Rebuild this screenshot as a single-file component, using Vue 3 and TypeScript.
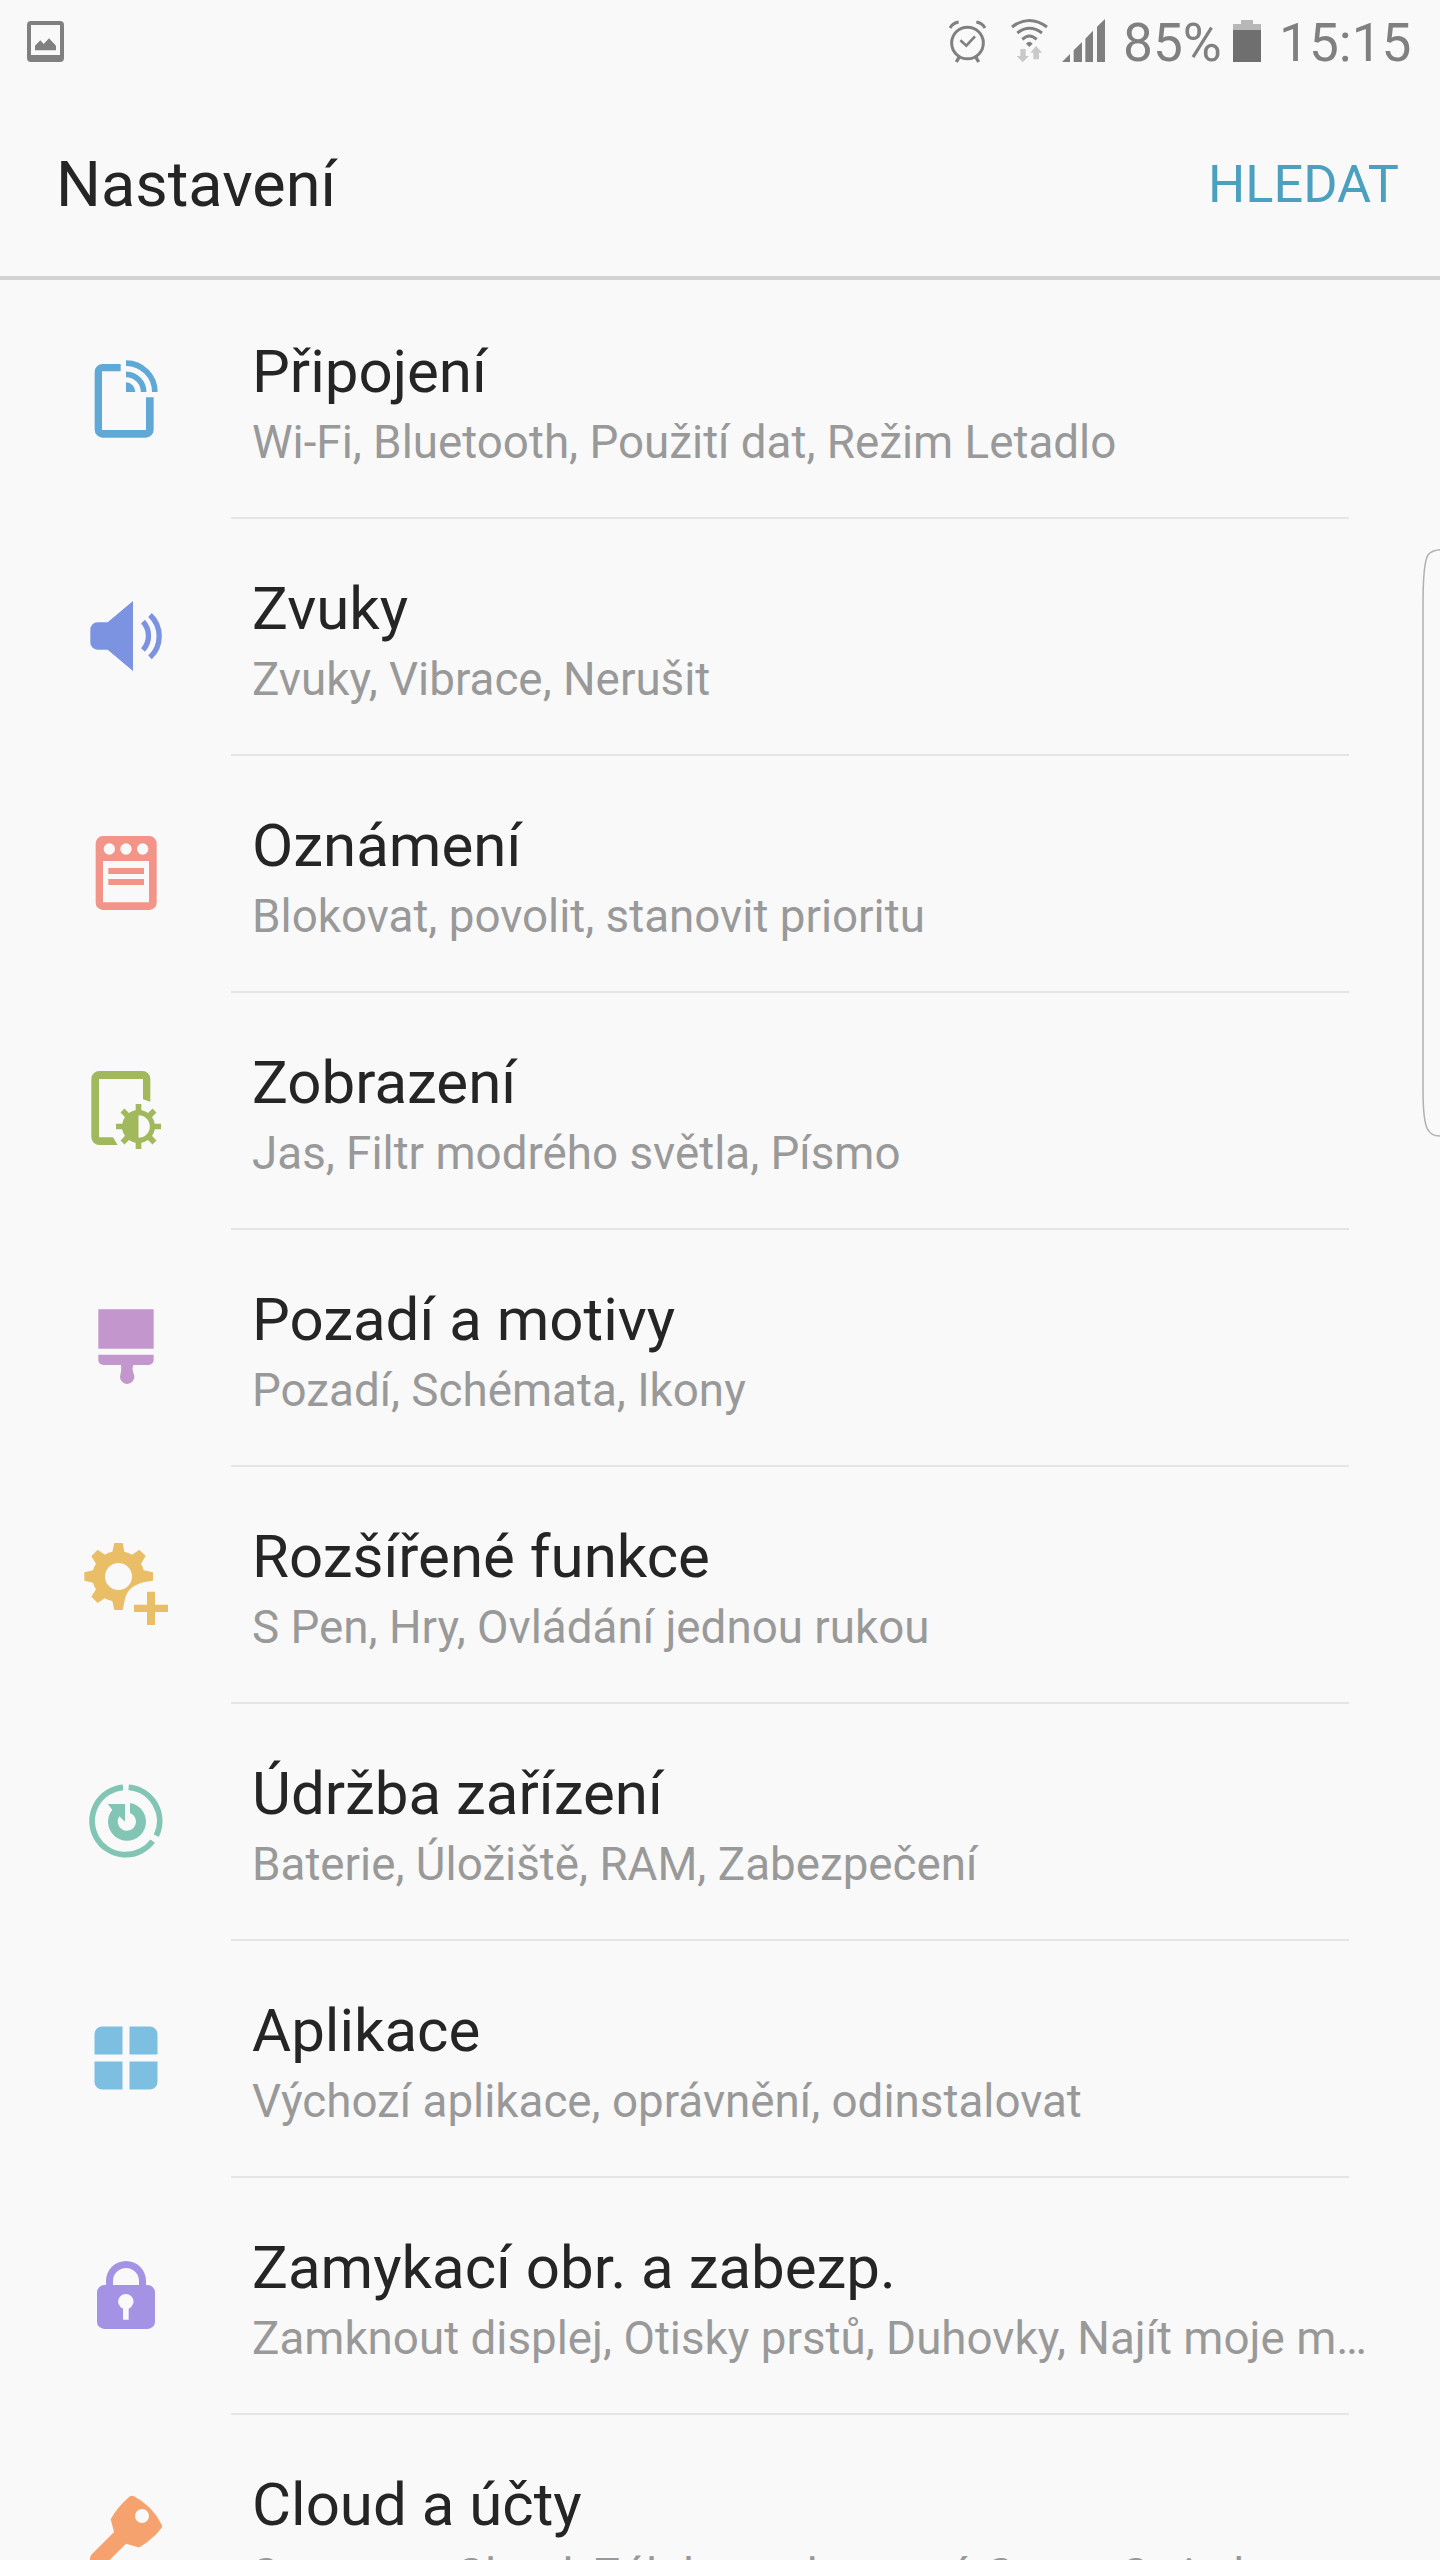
<script setup lang="ts">
interface Shape {
  d: string
  stroke?: number
}

interface SettingItem {
  title: string
  summary: string
  color: string
  viewBox: string
  shapes: Shape[]
}

const circle = (cx: number, cy: number, r: number): string =>
  `M${cx - r} ${cy}a${r} ${r} 0 1 0 ${2 * r} 0a${r} ${r} 0 1 0 ${-2 * r} 0Z`

const items: SettingItem[] = [
  {
    title: 'Připojení',
    summary: 'Wi-Fi, Bluetooth, Použití dat, Režim Letadlo',
    color: '#60a9d7',
    viewBox: '48 57 300 300',
    shapes: [
      { d: 'M182 102H128A24 24 0 0 0 104 126V299A24 24 0 0 0 128 323H257A24 24 0 0 0 281 299V202H258V300H126V124H182Z' },
      { d: 'M198 99.500A86.500 86.500 0 0 1 284.500 186', stroke: 17 },
      { d: 'M198 133A53 53 0 0 1 251 186', stroke: 17 },
      { d: 'M198 157A28 29 0 0 1 226 186H198Z' },
    ],
  },
  {
    title: 'Zvuky',
    summary: 'Zvuky, Vibrace, Nerušit',
    color: '#7b93e0',
    viewBox: '48 768 300 300',
    shapes: [
      { d: 'M143 877L219 813V1023L143 959H112A21 21 0 0 1 91 938V898A21 21 0 0 1 112 877Z' },
      { d: 'M249 875A63 63 0 0 1 249 960', stroke: 16 },
      { d: 'M270 855A87 87 0 0 1 270 982', stroke: 16 },
    ],
  },
  {
    title: 'Oznámení',
    summary: 'Blokovat, povolit, stanovit prioritu',
    color: '#f39488',
    viewBox: '48 39 300 300',
    shapes: [
      {
        d:
          'M130 78H268A22 22 0 0 1 290 100V278A22 22 0 0 1 268 300H129A22 22 0 0 1 107 278V100A22 22 0 0 1 130 78Z' +
          circle(148, 117, 17) + circle(198, 117, 17) + circle(248, 117, 17) +
          'M129 153H267V277H129ZM145 174H252V192H145ZM145 207H252V225H145Z',
      },
    ],
  },
  {
    title: 'Zobrazení',
    summary: 'Jas, Filtr modrého světla, Písmo',
    color: '#a1b95c',
    viewBox: '48 750 300 300',
    shapes: [
      { d: 'M271 875V807A24 24 0 0 0 247 783H118A24 24 0 0 0 94 807V981A24 24 0 0 0 118 1005H173L159 982H117V807H249V868Z' },
      { d: circle(235.5, 949.5, 49.5) + 'M235.500 915.500A34 34 0 0 1 235.500 983.500Z' },
      {
        d: 'M235.500 882V904M235.500 995V1017M168 949.500H190M281 949.500H303M187.500 901.500L203 917M268 982L283.500 997.500M283.500 901.500L268 917M203 982L187.500 997.500',
        stroke: 17,
      },
    ],
  },
  {
    title: 'Pozadí a motivy',
    summary: 'Pozadí, Schémata, Ikony',
    color: '#c396cd',
    viewBox: '48 51 300 300',
    shapes: [
      { d: 'M115 88H281V206H115Z' },
      { d: 'M115 224H281V240A15 15 0 0 1 266 255H220C217 263 217 270 220 279A21.500 21.500 0 1 1 181 284C184 274 184 264 183 255H130A15 15 0 0 1 115 240Z' },
    ],
  },
  {
    title: 'Rozšířené funkce',
    summary: 'S Pen, Hry, Ovládání jednou rukou',
    color: '#eabe67',
    viewBox: '48 762 300 300',
    shapes: [
      {
        d:
          'M163 789H188L193 815Q206 818 216 824L238 809L257 828L243 851Q249 861 251 871L279 877V902L250 907Q203 920 195 957L188 990H163L157 963Q145 961 134 955L113 969L94 950L108 928Q101 918 99 908L73 902V877L99 871Q101 861 108 851L94 829L113 809L135 824Q145 817 157 815Z' +
          circle(175.5, 889.5, 40.5),
      },
      { d: 'M261 935H285V974H324V996H285V1035H261V996H222V974H261Z' },
    ],
  },
  {
    title: 'Údržba zařízení',
    summary: 'Baterie, Úložiště, RAM, Zabezpečení',
    color: '#82c5b4',
    viewBox: '48 33 300 300',
    shapes: [
      { d: 'M206 82.300A101 101 0 0 1 289 227', stroke: 17 },
      { d: 'M278 243.500A101 101 0 1 1 189 82.300', stroke: 17 },
      { d: 'M210 129A57 57 0 1 1 157 149L143 132H195V185L178 169A27.500 27.500 0 1 0 210 159Z' },
    ],
  },
  {
    title: 'Aplikace',
    summary: 'Výchozí aplikace, oprávnění, odinstalovat',
    color: '#7cbfe1',
    viewBox: '48 744 300 300',
    shapes: [
      { d: 'M187.500 799.500H127A23 23 0 0 0 103.500 823V883.500H187.500Z' },
      { d: 'M208.500 799.500H269A23 23 0 0 1 292.500 823V883.500H208.500Z' },
      { d: 'M187.500 988.500H127A23 23 0 0 1 103.500 965V904.500H187.500Z' },
      { d: 'M208.500 988.500H269A23 23 0 0 0 292.500 965V904.500H208.500Z' },
    ],
  },
  {
    title: 'Zamykací obr. a zabezp.',
    summary: 'Zamknout displej, Otisky prstů, Duhovky, Najít moje m…',
    color: '#a492e4',
    viewBox: '48 45 300 300',
    shapes: [
      { d: 'M138 166V153A60 60 0 0 1 258 153V166H237V153A39 39 0 0 0 159 153V166Z' },
      {
        d: 'M133 165H263A22 22 0 0 1 285 187V275A22 22 0 0 1 263 297H133A22 22 0 0 1 111 275V187A22 22 0 0 1 133 165ZM189 236A23 23 0 1 1 206 236V269H189Z',
      },
    ],
  },
  {
    title: 'Cloud a účty',
    summary: 'Samsung Cloud, Záloha a obnovení, Smart Switch',
    color: '#f6a26e',
    viewBox: '48 756 300 300',
    shapes: [
      {
        d:
          'M208 800Q214 795 222 799Q275 826 305 884Q308 889 304 895Q280 927 241 950Q237 953 232 951L198 941L135 1004L105 1020L90 1004V985Q90 978 96 972L162 906L152 868Q170 833 208 800Z' +
          circle(246, 858, 21),
      },
    ],
  },
]
</script>

<template>
  <div class="screen">
    <header class="status">
      <svg class="shot" viewBox="81 54 111 138" fill="#808080" fill-rule="evenodd">
        <path d="M93 63H180A12 12 0 0 1 192 75V174A12 12 0 0 1 180 186H93A12 12 0 0 1 81 174V75A12 12 0 0 1 93 63ZM93 75V165H180V75Z" />
        <path d="M105 151V137L121 121L131 132L147 115L168 137V151Z" />
      </svg>
      <div class="tray">
        <svg class="alarm" viewBox="84 54 120 138" fill="none" stroke="#808080">
          <circle cx="142.500" cy="129" r="47.500" stroke-width="9" />
          <path d="M121 121L139 137L165 109" stroke-width="8" />
          <path d="M117 172L109 186M168 172L176 186" stroke-width="10" />
          <path d="M90 84Q98 69 116 66M195 84Q187 69 169 66" stroke-width="9" />
        </svg>
        <svg class="wifi" viewBox="270 54 120 138" fill="none" stroke="#808080" stroke-width="9">
          <path d="M276 81Q328 42 381 81M292 99Q328 71 366 99M307 118Q328 98 350 118" />
          <path d="M328 141L318 131Q328 120 338 131Z" fill="#808080" stroke="none" />
          <path d="M301 147H317V168H327L308 187L290 168H301ZM348 138L367 158H357V178H340V158H331Z" fill="#c9c9c9" stroke="none" />
        </svg>
        <svg class="signal" viewBox="426 54 129 138" fill="#808080">
          <path d="M426 186L450 162V186ZM461 186V151L486 126V186ZM496 186V116L519 92V186ZM531 186V80L555 57V186Z" />
        </svg>
        <span class="percent">85%</span>
        <svg class="battery" viewBox="939 54 84 138">
          <path d="M939 90V72H963V60H999V72H1023V90Z" fill="#b7b7b7" />
          <path d="M939 90H1023V186H939Z" fill="#6f6f6f" />
        </svg>
        <span class="clock">15:15</span>
      </div>
    </header>

    <div class="bar">
      <h1>Nastavení</h1>
      <button type="button">HLEDAT</button>
    </div>

    <ul class="list">
      <li v-for="item in items" :key="item.title" class="row">
        <svg class="icon" :viewBox="item.viewBox" fill-rule="evenodd">
          <path
            v-for="(shape, i) in item.shapes"
            :key="i"
            :d="shape.d"
            :fill="shape.stroke ? 'none' : item.color"
            :stroke="shape.stroke ? item.color : 'none'"
            :stroke-width="shape.stroke ?? 0"
          />
        </svg>
        <div class="text">
          <div class="title">{{ item.title }}</div>
          <div class="summary">{{ item.summary }}</div>
        </div>
      </li>
    </ul>

    <svg class="edge" viewBox="0 0 20 592" fill="none" stroke="#b0b0b0" stroke-width="1.500">
      <path d="M20 1.700Q11 2.500 8 7Q3 15 3 57V541Q3 573 7.500 581Q11 588 20 588" />
    </svg>
  </div>
</template>

<style>
body {
  margin: 0;
  background: #f9f9f9;
}
</style>

<style scoped>
.screen {
  position: relative;
  width: 1440px;
  height: 2560px;
  overflow: hidden;
  background: #f9f9f9;
  font-family: Roboto, 'Liberation Sans', sans-serif;
  color: #252525;
}
.status {
  display: flex;
  justify-content: space-between;
  box-sizing: border-box;
  height: 84px;
  padding: 18px 0 0 27px;
}
.status svg {
  height: 46px;
  flex: none;
}
.shot {
  width: 37px;
}
.tray {
  display: flex;
  height: 46px;
  width: 492px;
  font-size: 53.2px;
  line-height: 50px;
  color: #808080;
  white-space: nowrap;
}
.alarm,
.wifi {
  width: 40px;
}
.wifi {
  margin-left: 22px;
}
.signal {
  width: 43px;
  margin-left: 12px;
}
.percent {
  width: 110px;
  margin-left: 18px;
}
.battery {
  width: 28px;
}
.clock {
  margin-left: 18px;
}
.bar {
  display: flex;
  justify-content: space-between;
  align-items: center;
  box-sizing: border-box;
  height: 196px;
  padding: 8px 41px 0 56px;
  border-bottom: 4px solid #d3d3d3;
}
h1 {
  margin: 0;
  padding-top: 2px;
  font-size: 63px;
  font-weight: 400;
  line-height: 74px;
}
button {
  padding: 0;
  border: 0;
  background: none;
  font: 400 52.3px/62px Roboto, 'Liberation Sans', sans-serif;
  color: #4ba0bf;
}
.list {
  margin: 0;
  padding: 0;
  list-style: none;
}
.row {
  display: flex;
  box-sizing: border-box;
  height: 237px;
  padding-left: 76px;
  background: linear-gradient(#e5e5e5, #e5e5e5) 231px 0 / 1118px 2px no-repeat;
}
.row:first-child {
  background: none;
}
.icon {
  flex: none;
  width: 100px;
  height: 100px;
  margin-top: 69px;
}
.text {
  margin-left: 76px;
  padding-top: 57px;
  white-space: nowrap;
}
.title {
  font-size: 60px;
  line-height: 70px;
}
.summary {
  margin-top: 9px;
  font-size: 45.75px;
  line-height: 53px;
  color: #999;
}
.edge {
  position: absolute;
  right: 0;
  top: 548px;
  width: 20px;
  height: 592px;
}
</style>
